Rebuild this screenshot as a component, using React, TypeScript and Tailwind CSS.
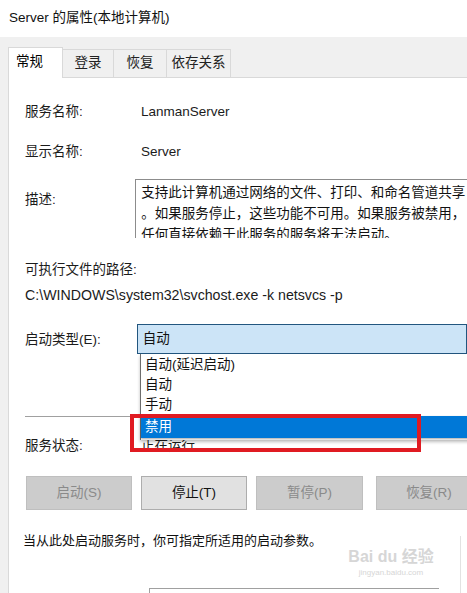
import React from "react";

const font = "font-['Segoe_UI','Liberation_Sans','Noto_Sans_CJK_SC',sans-serif]";

const tabs = ["常规", "登录", "恢复", "依存关系"];
const options = ["自动(延迟启动)", "自动", "手动"];

function Row({ label, value }: { label: string; value: string }) {
  return (
    <div className="flex h-[20px] items-center leading-[20px]">
      <span className="w-[116px] text-[#1b1b1b]">{label}</span>
      <span className="text-[#1b1b1b]">{value}</span>
    </div>
  );
}

function Btn({ label, enabled, className }: { label: string; enabled?: boolean; className?: string }) {
  return (
    <div
      className={
        "flex h-[34px] w-[106px] shrink-0 items-center justify-center border " +
        (enabled ? "border-[#adadad] bg-[#e1e1e1] text-[#111]" : "border-[#bfbfbf] bg-[#cccccc] text-[#8a8a8a]") +
        " " +
        (className ?? "")
      }
    >
      {label}
    </div>
  );
}

export default function App() {
  return (
    <div className={`relative h-[593px] w-[467px] overflow-hidden bg-[#f0f0f0] text-[13.5px] ${font}`}>
      {/* title bar */}
      <div className="flex h-[37px] items-center bg-white pl-[9px] text-[13.5px] text-[#111]">
        Server 的属性(本地计算机)
      </div>

      {/* tabs */}
      <div className="flex h-[40px] items-end pl-[8px]">
        {tabs.map((t, i) =>
          i === 0 ? (
            <div
              key={t}
              className="relative z-10 -mb-px flex h-[31px] w-[55px] items-start border border-b-0 border-[#d9d9d9] bg-white pl-[7px] pt-[4px] text-[13.5px]"
            >
              {t}
            </div>
          ) : (
            <div
              key={t}
              className={
                "flex h-[28px] items-center justify-center border border-l-0 border-b-0 border-[#d9d9d9] bg-[#f0f0f0] text-[13.5px] text-[#222] " +
                (i === 1 ? "w-[51px]" : i === 2 ? "w-[53px]" : "w-[64px]")
              }
            >
              {t}
            </div>
          )
        )}
      </div>

      {/* panel */}
      <div className="relative ml-[8px] h-[516px] border-l border-t border-[#d9d9d9] bg-white pl-[16px] pt-[24px]">
        <Row label="服务名称:" value="LanmanServer" />
        <div className="mt-[20px]">
          <Row label="显示名称:" value="Server" />
        </div>

        <div className="mt-[17px] flex">
          <span className="w-[113px] pt-[11px] leading-[20px] text-[#1b1b1b]">描述:</span>
          <div className="h-[59px] w-[340px] overflow-hidden border-l border-t border-[#8c8c8c] pl-[5px] pt-[2px] leading-[21px] text-[#111]">
            <p>支持此计算机通过网络的文件、打印、和命名管道共享</p>
            <p>。如果服务停止，这些功能不可用。如果服务被禁用，</p>
            <p>任何直接依赖于此服务的服务将无法启动。</p>
          </div>
        </div>

        <div className="mt-[22px] h-[20px] leading-[20px] text-[#1b1b1b]">可执行文件的路径:</div>
        <div className="mt-[5px] h-[20px] text-[14.2px] leading-[20px] text-[#1b1b1b]">
          C:\WINDOWS\system32\svchost.exe -k netsvcs -p
        </div>

        {/* startup type */}
        <div className="relative mt-[19px] flex h-[30px] items-center">
          <span className="w-[115px] pt-[2px] text-[#1b1b1b]">启动类型(E):</span>
          <div className="flex h-[30px] w-[340px] items-center border border-[#22567f] bg-[#cce4f7] pl-[5px] text-[#111]">
            自动
          </div>
          {/* dropdown list */}
          <div className="absolute left-[115px] top-[30px] z-20 w-[340px] border-l border-[#6d6d6d] bg-white pb-[2px] shadow-[0_2px_3px_rgba(0,0,0,0.25)]">
            {options.map((o) => (
              <div key={o} className="h-[20px] pl-[4px] leading-[22px] text-[#111]">
                {o}
              </div>
            ))}
            <div className="mt-[2px] h-[22px] bg-[#0078d7] pl-[4px] leading-[22px] text-white shadow-[0_1px_2px_rgba(0,0,0,0.35)]">
              禁用
            </div>
          </div>
        </div>

        {/* separator */}
        <div className="mt-[62px] h-px w-[430px] bg-[#a0a0a0]" />

        <div className="mt-[19px]">
          <Row label="服务状态:" value="正在运行" />
        </div>

        {/* buttons */}
        <div className="mt-[20px] flex pl-px">
          <Btn label="启动(S)" />
          <Btn label="停止(T)" enabled className="ml-[9px]" />
          <Btn label="暂停(P)" className="ml-[9px] w-[107px]" />
          <Btn label="恢复(R)" className="ml-[13px]" />
        </div>

        <div className="-ml-[2px] mt-[21px] h-[20px] leading-[20px] text-[13px] text-[#111]">
          当从此处启动服务时，你可指定所适用的启动参数。
        </div>

        <div className="ml-[124px] mt-[37px] h-[10px] w-[290px] border-l border-t border-[#a0a0a0]" />

        {/* right edge line */}
        <div className="absolute right-[6px] top-[458px] h-[60px] w-px bg-[#e2e2e2]" />
      </div>

      {/* red highlight box */}
      <div className="absolute left-[130px] top-[414px] z-30 h-[38px] w-[291px] border-[4px] border-[#e01b22]" />

      {/* watermark */}
      <div className="pointer-events-none absolute left-[350px] top-[547px] z-30 flex w-[82px] flex-col items-center text-[#d6d6d6]">
        <span className="whitespace-nowrap text-[16px] font-bold leading-[20px]">Bai du 经验</span>
        <span className="whitespace-nowrap text-[8px] leading-[12px]">jingyan.baidu.com</span>
      </div>
    </div>
  );
}
